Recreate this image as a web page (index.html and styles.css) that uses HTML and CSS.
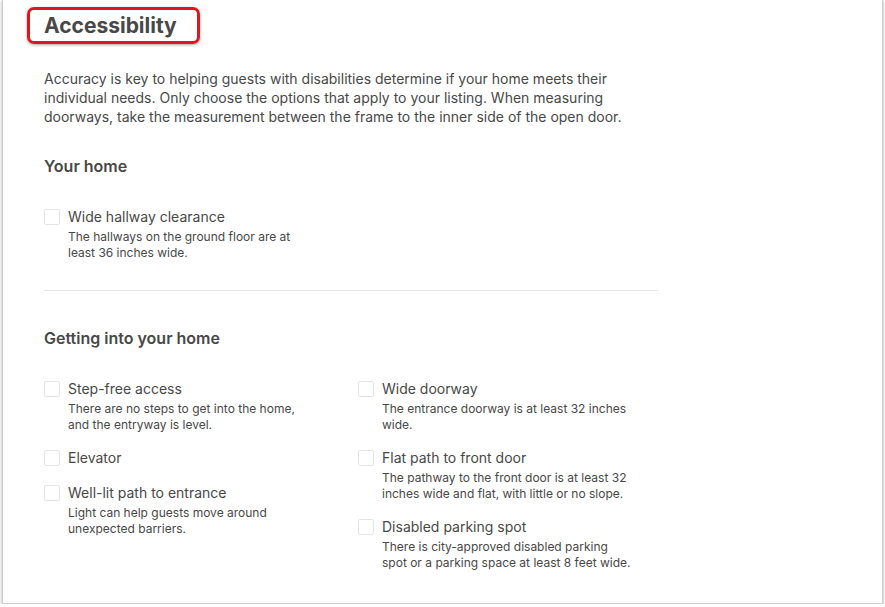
FILE: index.html
```html
<!DOCTYPE html>
<html lang="en">
<head>
    <meta charset="UTF-8">
    <meta name="viewport" content="width=device-width, initial-scale=1.0">
    <title>Accessibility</title>
    <link rel="stylesheet" href="styles.css">
</head>
<body>
    <div class="frame">
        <div class="content">
            <h1 class="title">Accessibility</h1>
            <p class="intro">Accuracy is key to helping guests with disabilities determine if your home meets their individual needs. Only choose the options that apply to your listing. When measuring doorways, take the measurement between the frame to the inner side of the open door.</p>

            <h2 class="section-title">Your home</h2>
            <div class="options">
                <div class="column">
                    <label class="option">
                        <span class="box"></span>
                        <span class="text">
                            <span class="name">Wide hallway clearance</span>
                            <span class="desc">The hallways on the ground floor are at least 36 inches wide.</span>
                        </span>
                    </label>
                </div>
            </div>

            <div class="divider"></div>

            <h2 class="section-title">Getting into your home</h2>
            <div class="options">
                <div class="column">
                    <label class="option">
                        <span class="box"></span>
                        <span class="text">
                            <span class="name">Step-free access</span>
                            <span class="desc">There are no steps to get into the home, and the entryway is level.</span>
                        </span>
                    </label>
                    <label class="option">
                        <span class="box"></span>
                        <span class="text">
                            <span class="name">Elevator</span>
                        </span>
                    </label>
                    <label class="option">
                        <span class="box"></span>
                        <span class="text">
                            <span class="name">Well-lit path to entrance</span>
                            <span class="desc">Light can help guests move around unexpected barriers.</span>
                        </span>
                    </label>
                </div>
                <div class="column">
                    <label class="option">
                        <span class="box"></span>
                        <span class="text">
                            <span class="name">Wide doorway</span>
                            <span class="desc">The entrance doorway is at least 32 inches wide.</span>
                        </span>
                    </label>
                    <label class="option">
                        <span class="box"></span>
                        <span class="text">
                            <span class="name">Flat path to front door</span>
                            <span class="desc">The pathway to the front door is at least 32 inches wide and flat, with little or no slope.</span>
                        </span>
                    </label>
                    <label class="option">
                        <span class="box"></span>
                        <span class="text">
                            <span class="name">Disabled parking spot</span>
                            <span class="desc">There is city-approved disabled parking spot or a parking space at least 8 feet wide.</span>
                        </span>
                    </label>
                </div>
            </div>
        </div>
    </div>
</body>
</html>
```

FILE: styles.css
```css
body {
    margin: 0;
    background-color: #ffffff;
    font-family: Inter, "Noto Sans", sans-serif;
    color: #484848;
}
.frame {
    width: 881px;
    height: 604px;
    margin-left: 2px;
    border: 1px solid #cfcfcf;
    border-top: none;
    box-shadow: 0 1px 3px rgba(0, 0, 0, 0.35);
    background-color: #ffffff;
    box-sizing: border-box;
    overflow: hidden;
}
.content {
    padding: 7px 0 0 41px;
    width: 614px;
}
.title {
    display: inline-block;
    margin: 0 0 0 -17px;
    padding: 0 20px 0 14px;
    border: 3px solid #e5141b;
    border-radius: 7px;
    box-shadow: 0 1px 3px rgba(0, 0, 0, 0.35);
    font-size: 21px;
    font-weight: 700;
    line-height: 31px;
}
.intro {
    margin: 25px 0 0;
    font-size: 14px;
    line-height: 19px;
}
.section-title {
    margin: 29px 0 0;
    font-size: 16px;
    font-weight: 600;
    line-height: 22px;
}
.options {
    display: flex;
    margin-top: 30px;
}
.column {
    flex: none;
    width: 314px;
    display: flex;
    flex-direction: column;
    gap: 15px;
}
.option {
    display: flex;
    gap: 8px;
    cursor: pointer;
}
.box {
    flex: none;
    width: 14px;
    height: 14px;
    margin-top: 2px;
    border: 1px solid #e4e4e4;
    border-radius: 2px;
}
.text {
    display: flex;
    flex-direction: column;
    width: 249px;
}
.name {
    font-size: 14px;
    line-height: 20px;
}
.desc {
    margin-top: 2px;
    font-size: 12px;
    line-height: 16px;
}
.divider {
    height: 1px;
    margin-top: 29px;
    background-color: #e6e6e6;
}
.divider + .section-title {
    margin-top: 36px;
}
```
